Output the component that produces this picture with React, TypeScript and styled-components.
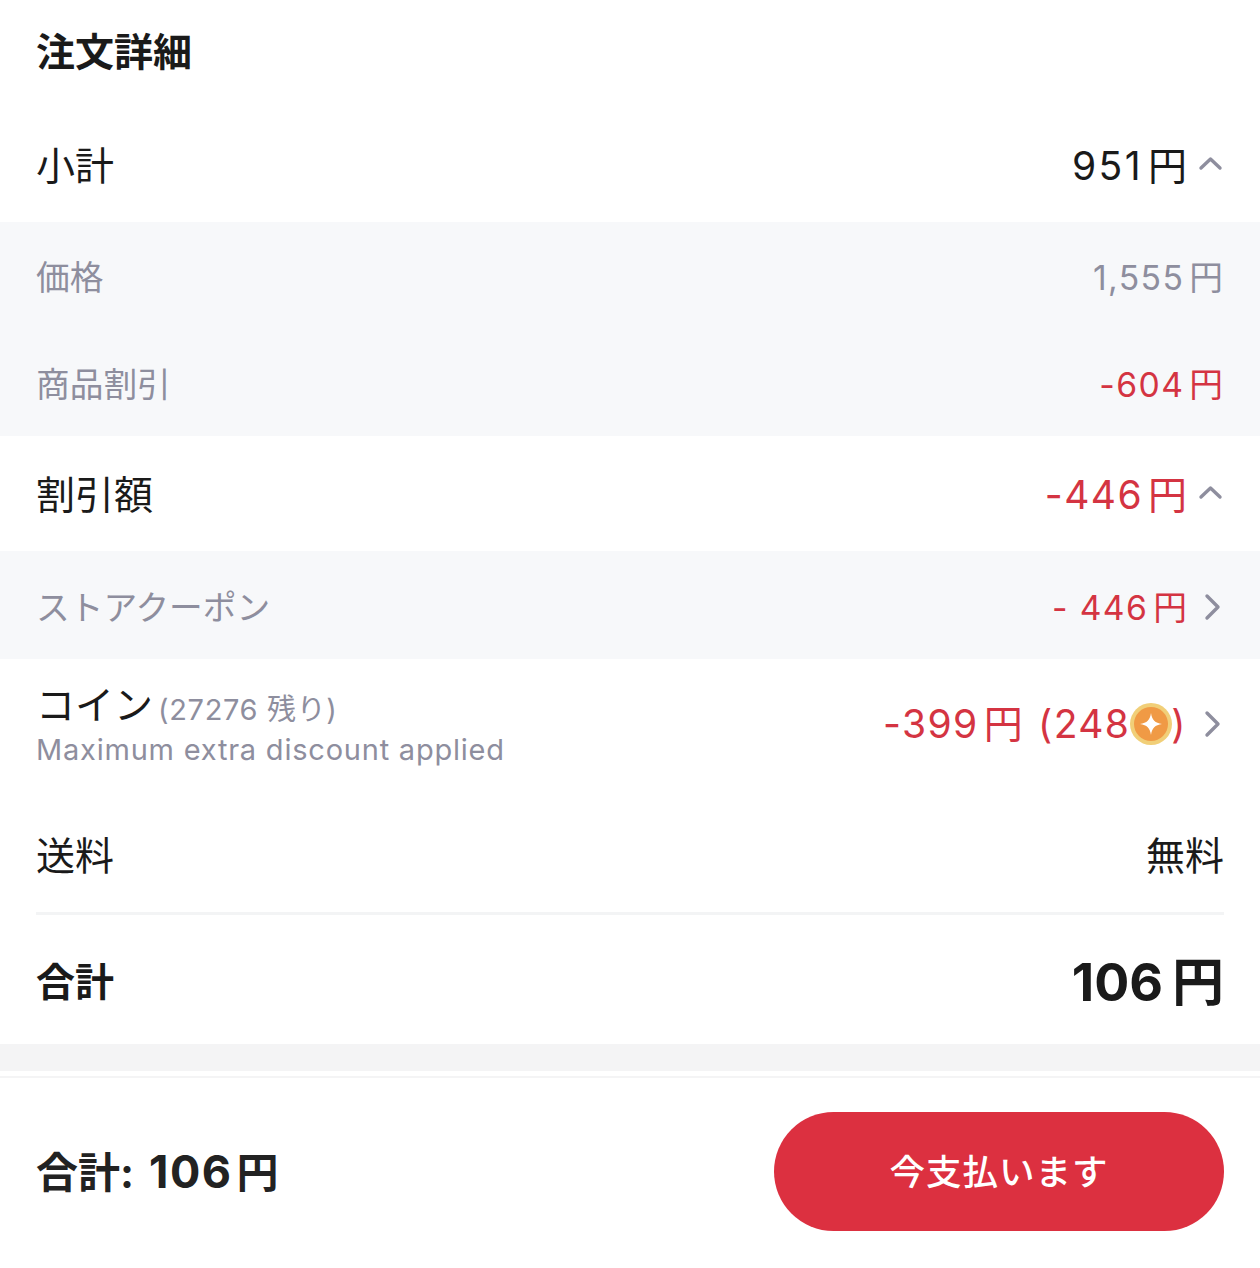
import React from 'react';
import styled, {createGlobalStyle} from 'styled-components';

const GlobalStyle = createGlobalStyle`
    html, body {
        margin: 0;
        padding: 0;
        background: #fff;
    }
    body {
        font-family: Inter, "Noto Sans CJK JP", sans-serif;
        color: #1a1a1a;
    }
`;

const Page = styled.div`
    width: 1260px;
    height: 1268px;
    overflow: hidden;
    background: #fff;
    display: flex;
    flex-direction: column;
`;

const Title = styled.h1`
    margin: 0;
    height: 110px;
    padding: 0 36px 7px;
    display: flex;
    align-items: center;
    font-size: 39px;
    font-weight: 700;
    line-height: 1;
    box-sizing: border-box;
`;

const Row = styled.div<{ $height: number, $shift?: number }>`
    height: ${p => p.$height}px;
    padding: ${p => Math.max(p.$shift ?? 0, 0) * 2}px 36px ${p => Math.max(-(p.$shift ?? 0), 0) * 2}px;
    display: flex;
    align-items: center;
    justify-content: space-between;
    box-sizing: border-box;
    font-size: 39px;
`;

const SubSection = styled.div`
    background: #f7f8fa;
    color: #8e8e9e;
`;

const SubRow = styled(Row)`
    font-size: 33.7px;
`;

const Amount = styled.div<{ $red?: boolean, $spacing?: number }>`
    display: flex;
    align-items: center;
    white-space: pre;
    letter-spacing: ${p => p.$spacing ?? 1.4}px;
    color: ${p => p.$red ? '#d43442' : 'inherit'};
`;

const Yen = styled.span`
    letter-spacing: 0;
    margin-left: 5px;
`;

const SubYen = styled(Yen)`
    margin-right: 1px;
`;

const IconBox = styled.svg<{ $nudge?: number }>`
    flex: none;
    margin-left: 9px;
    margin-top: ${p => p.$nudge ?? 0}px;
    fill: none;
    stroke: #8e8e9e;
    stroke-width: 3.4;
    stroke-linecap: round;
    stroke-linejoin: round;
`;

const CoinRow = styled(Row)`
    align-items: flex-start;
`;

const CoinLabel = styled.div`
    display: flex;
    flex-direction: column;
    padding-top: 23px;
`;

const CoinName = styled.div`
    display: flex;
    align-items: baseline;
    line-height: 46px;
`;

const CoinBalance = styled.span`
    font-size: 29px;
    color: #8e8e9e;
    margin-left: 5px;
    letter-spacing: 0.65px;
    position: relative;
    top: 1px;
`;

const CoinNote = styled.div`
    font-size: 29px;
    line-height: 36px;
    color: #8e8e9e;
    letter-spacing: 0.78px;
`;

const CoinAmount = styled(Amount)`
    padding-top: 42px;
    line-height: 46px;
`;

const CoinYen = styled(Yen)`
    margin-right: 3px;
`;

const Coin = styled.svg`
    vertical-align: -7px;
    margin: 0 -1px 0 0;
`;

const Divider = styled.div`
    height: 3px;
    margin: 0 36px;
    background: #f3f4f5;
`;

const TotalRow = styled(Row)`
    font-weight: 700;
`;

const TotalLabel = styled.span`
    font-size: 39px;
`;

const TotalValue = styled.span`
    font-size: 52px;
`;

const TotalYen = styled(Yen)`
    margin-left: 9px;
`;

const Gap = styled.div`
    height: 27px;
    background: #f4f4f5;
    margin-bottom: 5px;
`;

const Footer = styled.div`
    border-top: 2px solid #f4f4f5;
    padding: 34px 36px 0;
    display: flex;
    align-items: center;
    justify-content: space-between;
`;

const FooterTotal = styled.div`
    font-size: 42px;
    font-weight: 700;
    color: #222;
    white-space: pre;
    padding-bottom: 4px;
`;

const FooterNumber = styled.span`
    font-size: 45px;
    letter-spacing: 1.5px;
    margin-left: 5px;
`;

const FooterYen = styled(Yen)`
    margin-left: 4px;
`;

const PayButton = styled.button`
    width: 450px;
    height: 119px;
    padding: 0 0 4px;
    border: none;
    border-radius: 60px;
    background: #dc3040;
    color: #fff;
    font-family: inherit;
    font-size: 35.5px;
    font-weight: 500;
    letter-spacing: 1px;
`;

const ChevronUp = () => <IconBox width="28" height="20" viewBox="0 0 28 20">
    <path d="M5 15 L14.5 6 L24 15"/>
</IconBox>;

const ChevronRight = ({nudge}: { nudge?: number }) => <IconBox width="28" height="28" viewBox="0 0 28 28" $nudge={nudge}>
    <path d="M11 3 L22 14 L11 25"/>
</IconBox>;

const CoinIcon = () => <Coin width="42" height="42" viewBox="0 0 42 42">
    <circle cx="21" cy="21" r="21" fill="#f1cf78"/>
    <circle cx="21" cy="21" r="17" fill="#f09a45"/>
    <path d="M21 10 C22 17 25 20 32 21 C25 22 22 25 21 32 C20 25 17 22 10 21 C17 20 20 17 21 10 Z" fill="#fff"/>
</Coin>;

export default function App() {
    return <Page>
        <GlobalStyle/>
        <Title>注文詳細</Title>
        <Row $height={112} $shift={-3}>
            <span>小計</span>
            <Amount $spacing={2.4}><span>951<Yen>円</Yen></span><ChevronUp/></Amount>
        </Row>
        <SubSection>
            <SubRow $height={107}>
                <span>価格</span>
                <Amount><span>1,555<SubYen>円</SubYen></span></Amount>
            </SubRow>
            <SubRow $height={107}>
                <span>商品割引</span>
                <Amount $red><span>-604<SubYen>円</SubYen></span></Amount>
            </SubRow>
        </SubSection>
        <Row $height={115} $shift={-2}>
            <span>割引額</span>
            <Amount $red><span>-446<Yen>円</Yen></span><ChevronUp/></Amount>
        </Row>
        <SubSection>
            <SubRow $height={108}>
                <span>ストアクーポン</span>
                <Amount $red><span>- 446<Yen>円</Yen></span><ChevronRight nudge={4}/></Amount>
            </SubRow>
        </SubSection>
        <CoinRow $height={131}>
            <CoinLabel>
                <CoinName>コイン<CoinBalance>(27276 残り)</CoinBalance></CoinName>
                <CoinNote>Maximum extra discount applied</CoinNote>
            </CoinLabel>
            <CoinAmount $red><span>-399<CoinYen>円</CoinYen> (248<CoinIcon/>)</span><ChevronRight/></CoinAmount>
        </CoinRow>
        <Row $height={122} $shift={2}>
            <span>送料</span>
            <span>無料</span>
        </Row>
        <Divider/>
        <TotalRow $height={129} $shift={-1}>
            <TotalLabel>合計</TotalLabel>
            <TotalValue>106<TotalYen>円</TotalYen></TotalValue>
        </TotalRow>
        <Gap/>
        <Footer>
            <FooterTotal>合計: <FooterNumber>106</FooterNumber><FooterYen>円</FooterYen></FooterTotal>
            <PayButton>今支払います</PayButton>
        </Footer>
    </Page>;
}
